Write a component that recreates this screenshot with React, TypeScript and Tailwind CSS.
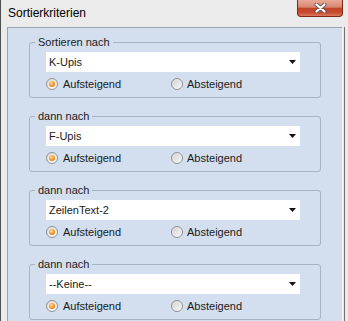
import React from "react";

function Radio({ checked }: { checked?: boolean }) {
    return (
        <div className="w-[12px] h-[12px] rounded-full border border-[#8d9091] bg-[linear-gradient(135deg,#dcdcdc,#ffffff)] flex items-center justify-center shrink-0">
            {checked ? (
                <div className="w-[6px] h-[6px] rounded-full bg-[radial-gradient(circle_at_40%_35%,#ffe0a8,#f5901e_55%,#c55a06)]" />
            ) : (
                <div className="w-[8px] h-[8px] rounded-full bg-[linear-gradient(135deg,#d6d6d6,#f4f4f4)]" />
            )}
        </div>
    );
}

function Group({ label, value }: { label: string; value: string }) {
    return (
        <fieldset className="h-[63px] border border-[#a9b3c1] rounded-[3px]">
            <legend className="ml-[5px] px-[3px] leading-[14px]">{label}</legend>
            <div className="ml-[16px] mt-[3px] w-[254px] h-[20px] bg-white flex items-center pl-[3px] pr-[4px]">
                <span className="flex-1 leading-[13px]">{value}</span>
                <svg width="7" height="4" viewBox="0 0 7 4">
                    <polygon points="0,0 7,0 3.5,4" fill="#111" />
                </svg>
            </div>
            <div className="ml-[16px] mt-[6px] h-[12px] flex items-center">
                <div className="w-[125px] flex items-center gap-[5px]">
                    <Radio checked />
                    <span className="leading-[13px]">Aufsteigend</span>
                </div>
                <div className="flex items-center gap-[4px]">
                    <Radio />
                    <span className="leading-[13px]">Absteigend</span>
                </div>
            </div>
        </fieldset>
    );
}

export default function App() {
    const groups = [
        { label: "Sortieren nach", value: "K-Upis" },
        { label: "dann nach", value: "F-Upis" },
        { label: "dann nach", value: "ZeilenText-2" },
        { label: "dann nach", value: "--Keine--" },
    ];

    return (
        <div className="w-[348px] h-[321px] overflow-hidden flex flex-col bg-[#ebebeb] border-l border-[#505050] text-[11px] text-[#1a1a1a] font-['Liberation_Sans',Arial,sans-serif]">
            {/* title bar */}
            <div className="h-[27px] flex items-start shrink-0">
                <div className="pl-[7px] pt-[6px] text-[12px] leading-[14px] text-black">Sortierkriterien</div>
                <div className="ml-auto mr-[5px] w-[46px] h-[17px] rounded-b-[4px] border border-t-0 border-[#7d2a1c] bg-[linear-gradient(#eaa998,#d98571_45%,#c2432a_52%,#c64a30_78%,#dc7a5c)] flex items-center justify-center">
                    <svg width="13" height="10" viewBox="0 0 13 10">
                        <path d="M2.5 1.5 L10.5 8.5 M10.5 1.5 L2.5 8.5" stroke="#5a5a5a" strokeWidth="4" strokeLinecap="round" />
                        <path d="M2.5 1.5 L10.5 8.5 M10.5 1.5 L2.5 8.5" stroke="#fff" strokeWidth="2.2" strokeLinecap="round" />
                    </svg>
                </div>
            </div>

            {/* body */}
            <div className="flex-1 flex pl-[6px]">
                <div className="w-[336px] bg-[#d3dfee] border-l border-t border-r border-l-[#9aa3ae] border-t-[#9aa3ae] border-r-[#f2f2f2] px-[21px] pt-[7px] flex flex-col gap-[11px]">
                    {groups.map((g, i) => (
                        <Group key={i} label={g.label} value={g.value} />
                    ))}
                </div>
                <div className="ml-px w-px bg-[#727272]" />
            </div>
        </div>
    );
}
